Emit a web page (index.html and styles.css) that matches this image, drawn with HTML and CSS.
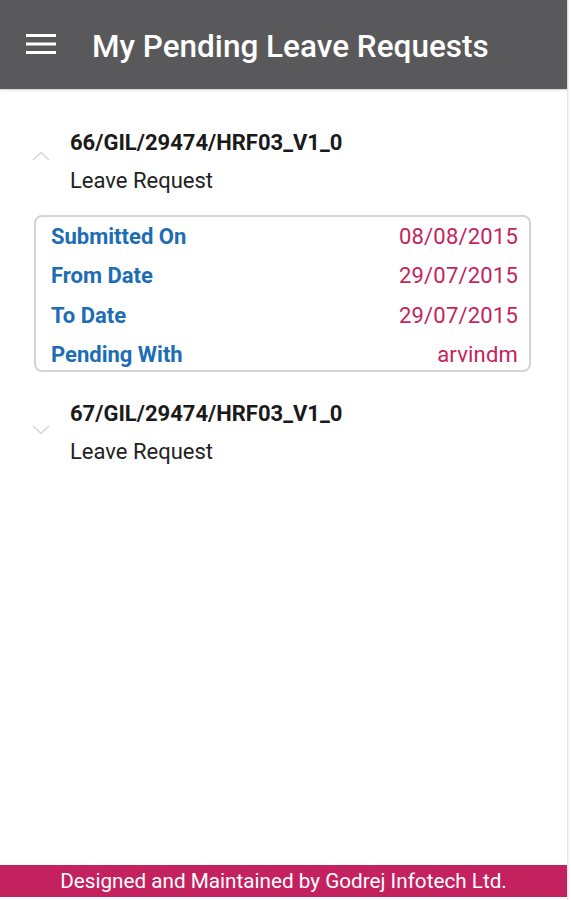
FILE: index.html
```html
<!DOCTYPE html>
<html>
<head>
<meta charset="utf-8">
<link rel="stylesheet" href="styles.css">
</head>
<body>
<div class="app">
  <header class="topbar">
    <svg class="menu" width="30" height="22" viewBox="0 0 30 22">
      <rect x="0" y="1" width="30" height="3" fill="#fff"/>
      <rect x="0" y="9.5" width="30" height="3" fill="#fff"/>
      <rect x="0" y="18" width="30" height="3" fill="#fff"/>
    </svg>
    <h1 class="title">My Pending Leave Requests</h1>
  </header>

  <main class="content">
    <section class="item">
      <div class="item-head">
        <svg class="chev" width="18" height="10" viewBox="0 0 18 10"><path d="M1 9 L9 1.5 L17 9" fill="none" stroke="#d6d6d6" stroke-width="1.6"/></svg>
        <div class="item-text">
          <div class="item-id">66/GIL/29474/HRF03_V1_0</div>
          <div class="item-type">Leave Request</div>
        </div>
      </div>
      <div class="card">
        <div class="row"><span class="label">Submitted On</span><span class="value">08/08/2015</span></div>
        <div class="row"><span class="label">From Date</span><span class="value">29/07/2015</span></div>
        <div class="row"><span class="label">To Date</span><span class="value">29/07/2015</span></div>
        <div class="row"><span class="label">Pending With</span><span class="value">arvindm</span></div>
      </div>
    </section>

    <section class="item">
      <div class="item-head">
        <svg class="chev down" width="18" height="10" viewBox="0 0 18 10"><path d="M1 1 L9 8.5 L17 1" fill="none" stroke="#d6d6d6" stroke-width="1.6"/></svg>
        <div class="item-text">
          <div class="item-id">67/GIL/29474/HRF03_V1_0</div>
          <div class="item-type">Leave Request</div>
        </div>
      </div>
    </section>
  </main>

  <footer class="footer">Designed and Maintained by Godrej Infotech Ltd.</footer>
</div>
</body>
</html>
```

FILE: styles.css
```css
html, body {
  margin: 0;
  padding: 0;
  background: #ffffff;
}

body {
  font-family: Roboto, "Liberation Sans", sans-serif;
}

.app {
  width: 567px;
  height: 900px;
  display: flex;
  flex-direction: column;
  box-shadow: 1px 0 2px rgba(0,0,0,0.15);
}

.topbar {
  height: 89px;
  background: #59595b;
  display: flex;
  align-items: center;
  padding-left: 26px;
  box-shadow: 0 1px 2px rgba(0,0,0,0.2);
}

.menu {
  display: block;
  margin-top: -2px;
}

.title {
  margin: 5px 0 0 36px;
  color: #ffffff;
  font-size: 31.5px;
  font-weight: 500;
  line-height: 36px;
}

.content {
  flex: 1;
  padding-top: 40px;
}

.item {
  margin-bottom: 28px;
}

.item-head {
  display: flex;
  align-items: flex-start;
  padding-left: 32px;
}

.chev {
  display: block;
  margin-top: 22px;
  flex: none;
}

.chev.down {
  margin-top: 25px;
}

.item-text {
  margin-left: 20px;
}

.item-id {
  font-size: 22px;
  font-weight: 700;
  line-height: 28px;
  color: #1a1a1a;
}

.item-type {
  font-size: 22px;
  font-weight: 400;
  line-height: 28px;
  margin-top: 10px;
  color: #222222;
}

.card {
  margin: 20px 36px 0 34px;
  border: 2px solid #d4d4d4;
  border-radius: 8px;
  padding: 5px 11px 0 15px;
  display: flex;
  flex-direction: column;
  gap: 9.3px;
}

.row {
  display: flex;
  justify-content: space-between;
  line-height: 30px;
  font-size: 22px;
}

.label {
  color: #1c6db4;
  font-weight: 700;
}

.value {
  color: #c4245d;
  font-weight: 400;
  letter-spacing: 0.2px;
}

.footer {
  height: 32px;
  margin-bottom: 3px;
  background: #c4215f;
  color: #ffffff;
  font-size: 20.7px;
  line-height: 32px;
  text-align: center;
}
```
